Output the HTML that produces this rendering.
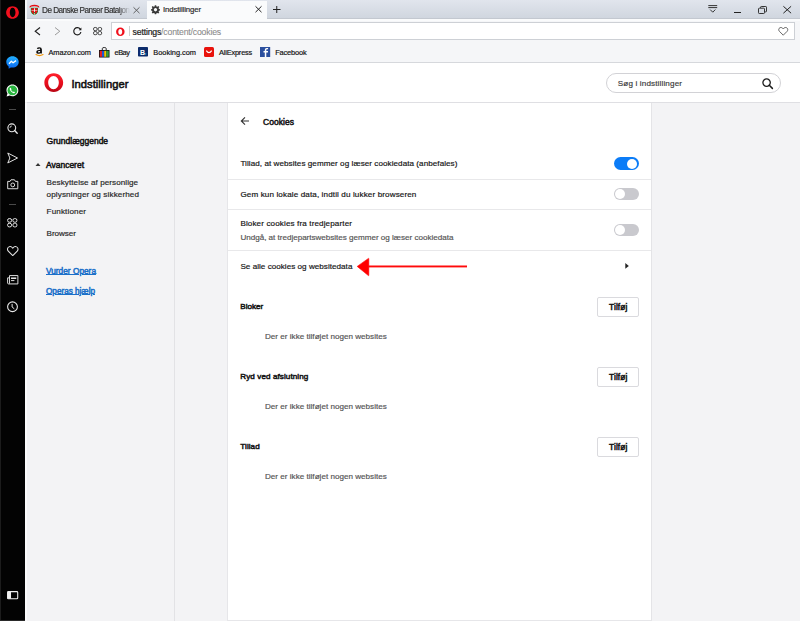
<!DOCTYPE html>
<html><head><meta charset="utf-8">
<style>
html,body{margin:0;padding:0;}
body{width:800px;height:621px;position:relative;overflow:hidden;background:#f3f3f5;font-family:"Liberation Sans",sans-serif;}
.a{position:absolute;}
.t{position:absolute;white-space:nowrap;line-height:1;}
svg{position:absolute;overflow:visible;}
</style></head><body>
<!-- black side panel -->
<div class="a" style="left:0;top:0;width:25px;height:621px;background:#030303;"></div>
<div class="a" style="left:0;top:0;width:1px;height:621px;background:#1c1c1c;"></div>
<div class="a" style="left:0;top:620px;width:25px;height:1px;background:#2a2a2a;"></div>
<!-- tab strip -->
<div class="a" style="left:25px;top:0;width:775px;height:18px;background:linear-gradient(#e1e5ed,#d0d6df);"></div>
<div class="a" style="left:25px;top:18px;width:775px;height:1px;background:#c3c8d0;"></div>
<div class="a" style="left:25px;top:19px;width:775px;height:2px;background:#fafbfc;"></div>
<!-- white strip next to sidebar -->
<div class="a" style="left:25px;top:0;width:2px;height:19px;background:#f4f6f8;"></div>
<!-- active tab -->
<div class="a" style="left:147px;top:1px;width:120px;height:20px;background:#fafbfc;"></div>
<!-- toolbar -->
<div class="a" style="left:25px;top:21px;width:775px;height:41px;background:#f5f6f8;"></div>
<div class="a" style="left:25px;top:62px;width:775px;height:1px;background:#d6d8dc;"></div>
<!-- address box -->
<div class="a" style="left:110.5px;top:22px;width:682.5px;height:16.4px;background:#fff;border:1px solid #cdd0d5;"></div>
<div class="a" style="left:129px;top:26px;width:1px;height:10px;background:#d0d0d0;"></div>
<div class="t" style="left:132.6px;top:27.5px;font-size:8.7px;color:#1a1a1a;letter-spacing:-0.18px;-webkit-text-stroke:0.2px #1a1a1a;">settings<span style="color:#8c8c8c;-webkit-text-stroke:0.1px #8c8c8c;">/content/cookies</span></div>

<!-- settings header -->
<div class="a" style="left:25px;top:63px;width:775px;height:39px;background:#fff;"></div>
<div class="a" style="left:27px;top:102px;width:773px;height:1px;background:#dfdfe3;"></div>
<!-- settings left nav -->
<div class="a" style="left:25px;top:103px;width:2px;height:518px;background:#fbfbfc;"></div>
<div class="a" style="left:27px;top:103px;width:147px;height:518px;background:#f3f3f5;"></div>
<div class="a" style="left:174px;top:103px;width:1px;height:518px;background:#e2e2e5;"></div>
<!-- card -->
<div class="a" style="left:227px;top:103px;width:423px;height:517px;background:#fff;border-left:1px solid #e6e6e9;border-right:1px solid #e4e4e7;border-bottom:1px solid #e6e6e9;"></div>
<div class="a" style="left:228px;top:178.5px;width:423px;height:1px;background:#e8e8ea;"></div>
<div class="a" style="left:228px;top:208.5px;width:423px;height:1px;background:#e8e8ea;"></div>
<div class="a" style="left:228px;top:249.5px;width:423px;height:1px;background:#e8e8ea;"></div>

<!-- search box -->
<div class="a" style="left:606px;top:73.3px;width:173px;height:17.8px;border:1px solid #d2d2d6;border-radius:10px;background:#fff;"></div>
<svg style="left:762px;top:78px" width="11" height="11" viewBox="0 0 11 11"><circle cx="4.6" cy="4.6" r="3.7" fill="none" stroke="#1c1c1c" stroke-width="1.3"/><path d="M7.3 7.3 L10.4 10.4" stroke="#1c1c1c" stroke-width="1.5" stroke-linecap="round"/></svg>

<!-- buttons -->
<div class="a" style="left:597px;top:297px;width:40px;height:18px;border:1px solid #dadade;border-radius:2px;background:#fff;"></div>
<div class="a" style="left:597px;top:367px;width:40px;height:18px;border:1px solid #dadade;border-radius:2px;background:#fff;"></div>
<div class="a" style="left:597px;top:437px;width:40px;height:18px;border:1px solid #dadade;border-radius:2px;background:#fff;"></div>

<!-- toggles -->
<div class="a" style="left:613.5px;top:157.3px;width:25.5px;height:13px;border-radius:6.5px;background:#0b7cf7;"></div>
<div class="a" style="left:626.8px;top:158.6px;width:10.5px;height:10.5px;border-radius:50%;background:#fff;"></div>
<div class="a" style="left:613.5px;top:187.8px;width:25.5px;height:12.6px;border-radius:6.3px;background:#c9c9ce;"></div>
<div class="a" style="left:614.8px;top:189.1px;width:10px;height:10px;border-radius:50%;background:#fff;"></div>
<div class="a" style="left:613.5px;top:223.8px;width:25.5px;height:12.6px;border-radius:6.3px;background:#c9c9ce;"></div>
<div class="a" style="left:614.8px;top:225.1px;width:10px;height:10px;border-radius:50%;background:#fff;"></div>

<!-- card icons -->
<svg style="left:240px;top:116px" width="10" height="10" viewBox="0 0 10 10"><path d="M9 5 H1.5 M5 1.3 L1.3 5 L5 8.7" fill="none" stroke="#333" stroke-width="1.1"/></svg>
<svg style="left:625.3px;top:262.5px" width="4" height="5.8" viewBox="0 0 4 5.8"><path d="M0.3 0 L3.8 2.9 L0.3 5.8 Z" fill="#222"/></svg>
<svg style="left:35px;top:161.5px" width="6" height="5" viewBox="0 0 6 5"><path d="M0.5 4 L3 1 L5.5 4 Z" fill="#333"/></svg>

<!-- red arrow -->
<svg style="left:350px;top:250px" width="120" height="30" viewBox="0 0 120 30"><path d="M7.2 16.4 L18.4 8.4 Q18.8 8.2 18.8 8.7 L18.8 25.3 Q18.8 25.8 18.4 25.6 Z" fill="#ff0000" stroke="#ff0000" stroke-width="0.6" stroke-linejoin="round"/><rect x="18" y="15.5" width="99" height="1.9" fill="#ff0a0a"/></svg>

<!-- header opera logo -->
<svg style="left:44px;top:73.4px" width="19.5" height="19.2" viewBox="0 0 20 20"><defs><linearGradient id="og" x1="0" y1="0" x2="0" y2="1"><stop offset="0" stop-color="#ff1f2a"/><stop offset="0.6" stop-color="#e40c1c"/><stop offset="1" stop-color="#b80614"/></linearGradient></defs><path fill-rule="evenodd" fill="url(#og)" d="M10 0.2 C15.6 0.2 19.8 4.6 19.8 10 C19.8 15.4 15.6 19.8 10 19.8 C4.4 19.8 0.2 15.4 0.2 10 C0.2 4.6 4.4 0.2 10 0.2 Z M9.75 3.0 C6.5 3.0 4.2 6.2 4.2 9.9 C4.2 13.6 6.5 16.9 9.75 16.9 C13 16.9 15.3 13.6 15.3 9.9 C15.3 6.2 13 3.0 9.75 3.0 Z"/></svg>

<!-- sidebar opera logo -->
<svg style="left:6px;top:6px" width="13" height="13" viewBox="0 0 20 20"><path fill-rule="evenodd" fill="#f2101e" d="M10 0.2 C15.6 0.2 19.8 4.6 19.8 10 C19.8 15.4 15.6 19.8 10 19.8 C4.4 19.8 0.2 15.4 0.2 10 C0.2 4.6 4.4 0.2 10 0.2 Z M10.2 2.8 C7.6 2.8 5.8 6 5.8 10.1 C5.8 14.2 7.6 17.3 10.2 17.3 C12.8 17.3 14.6 14.2 14.6 10.1 C14.6 6 12.8 2.8 10.2 2.8 Z"/></svg>
<!-- messenger -->
<svg style="left:6px;top:56px" width="13" height="13" viewBox="0 0 13 13"><defs><linearGradient id="mg" x1="0" y1="0" x2="0" y2="1"><stop offset="0" stop-color="#22b0ff"/><stop offset="1" stop-color="#0a66f0"/></linearGradient></defs><path d="M6.5 0.3 C10.1 0.3 12.7 2.8 12.7 6 C12.7 9.2 10.1 11.6 6.5 11.6 C5.9 11.6 5.3 11.5 4.8 11.4 L2.7 12.7 L2.6 10.5 C1.1 9.4 0.3 7.8 0.3 6 C0.3 2.8 2.9 0.3 6.5 0.3 Z" fill="url(#mg)"/><path d="M3 7.7 L5.4 5.3 L7.1 6.7 L10 4.6" fill="none" stroke="#fff" stroke-width="1.35" stroke-linejoin="round"/></svg>
<!-- whatsapp -->
<svg style="left:5.9px;top:84px" width="12.8" height="13" viewBox="0 0 13 13"><path d="M6.5 0.5 C9.9 0.5 12.5 3.1 12.5 6.4 C12.5 9.7 9.9 12.3 6.5 12.3 C5.5 12.3 4.6 12.1 3.8 11.6 L0.6 12.5 L1.5 9.5 C0.9 8.6 0.5 7.5 0.5 6.4 C0.5 3.1 3.1 0.5 6.5 0.5 Z" fill="#fff"/><circle cx="6.5" cy="6.4" r="5" fill="#2ab540"/><path d="M4.3 3.6 C3.6 4.2 3.6 5.3 4.4 6.6 C5.2 7.9 6.6 9 7.8 9.2 C8.6 9.3 9.1 8.9 9.2 8.4 L8 7.6 L7.3 8.1 C6.4 7.7 5.6 6.9 5.2 6 L5.6 5.3 L4.9 3.9 Z" fill="#fff"/></svg>
<div class="a" style="left:9px;top:109px;width:7px;height:1px;background:#4a4a4a;"></div>
<div class="a" style="left:9px;top:203.5px;width:7px;height:1px;background:#4a4a4a;"></div>
<!-- search -->
<svg style="left:7px;top:123px" width="11" height="11" viewBox="0 0 11 11"><circle cx="4.8" cy="4.8" r="3.9" fill="none" stroke="#e8e8e8" stroke-width="1.1"/><path d="M3 4.8 A1.8 1.8 0 0 1 4.8 3" fill="none" stroke="#e8e8e8" stroke-width="0.9"/><path d="M7.6 7.6 L10.2 10.2" stroke="#e8e8e8" stroke-width="1.4" stroke-linecap="round"/></svg>
<!-- send -->
<svg style="left:6.5px;top:151.5px" width="11.5" height="12" viewBox="0 0 12 12"><path d="M0.8 0.8 L11 6 L0.8 11.2 L3 6 Z" fill="none" stroke="#e8e8e8" stroke-width="1" stroke-linejoin="round"/></svg>
<!-- camera -->
<svg style="left:6.5px;top:178.5px" width="11.5" height="10.5" viewBox="0 0 12 11"><path d="M0.7 2.5 H3.2 L4.2 0.8 H7.8 L8.8 2.5 H11.3 V10.2 H0.7 Z" fill="none" stroke="#e8e8e8" stroke-width="1"/><circle cx="6" cy="6.2" r="2" fill="none" stroke="#e8e8e8" stroke-width="1"/></svg>
<!-- speed dial -->
<svg style="left:7px;top:218px" width="10.5" height="9.5" viewBox="0 0 10.5 9.5"><g fill="none" stroke="#e8e8e8" stroke-width="1"><rect x="0.6" y="0.6" width="4" height="3.6" rx="1.6"/><rect x="5.9" y="0.6" width="4" height="3.6" rx="1.6"/><rect x="0.6" y="5.3" width="4" height="3.6" rx="1.6"/><rect x="5.9" y="5.3" width="4" height="3.6" rx="1.6"/></g></svg>
<!-- heart -->
<svg style="left:6.5px;top:246px" width="11.5" height="10" viewBox="0 0 12 10.5"><path d="M6 10 L1.3 5.3 C0 4 0.3 1.6 1.9 0.9 C3.4 0.2 4.9 0.8 6 2.3 C7.1 0.8 8.6 0.2 10.1 0.9 C11.7 1.6 12 4 10.7 5.3 Z" fill="none" stroke="#e8e8e8" stroke-width="1.1" stroke-linejoin="round"/></svg>
<!-- news -->
<svg style="left:6.5px;top:274.5px" width="11.5" height="9.5" viewBox="0 0 12 10"><path d="M2.6 0.6 H11.4 V9.4 H1.6 C1 9.4 0.6 9 0.6 8.4 V3 H2.6" fill="none" stroke="#e8e8e8" stroke-width="1"/><path d="M2.6 0.6 V9" stroke="#e8e8e8" stroke-width="1"/><rect x="4.2" y="2.6" width="5.5" height="1.6" fill="#e8e8e8"/><rect x="4.2" y="5.4" width="3.5" height="1" fill="#e8e8e8"/></svg>
<!-- clock -->
<svg style="left:6.8px;top:301.3px" width="11" height="11.5" viewBox="0 0 11 11.5"><circle cx="5.5" cy="5.75" r="4.9" fill="none" stroke="#e8e8e8" stroke-width="1.1"/><path d="M5.1 2.9 V6 L7.3 7.8" fill="none" stroke="#e8e8e8" stroke-width="1"/></svg>
<!-- sidebar toggle -->
<svg style="left:6.8px;top:591px" width="11.3" height="8.4" viewBox="0 0 11.5 8.5"><rect x="0.6" y="0.6" width="10.3" height="7.3" rx="0.8" fill="none" stroke="#f0f0f0" stroke-width="1.1"/><rect x="0.6" y="0.6" width="3.5" height="7.3" fill="#f0f0f0"/></svg>

<!-- tab favicon -->
<svg style="left:29px;top:3.5px" width="11" height="12" viewBox="0 0 11 12"><path d="M1.2 3.4 H9.6 V7.8 Q9.2 10.6 5.4 11.8 Q1.6 10.6 1.2 7.8 Z" fill="#d8f6f0"/><path d="M1.8 3.8 H9 V7.8 Q8.6 10 5.4 11.2 Q2.2 10 1.8 7.8 Z" fill="#1d8a3c"/><path d="M2.4 4.2 H8.4 V7.6 Q8 9.6 5.4 10.6 Q2.8 9.6 2.4 7.6 Z" fill="#e80d12"/><path d="M5 4.2 H5.9 V10.6 H5 Z M2.4 5.9 H8.4 V6.6 H2.4 Z" fill="#f6f6f6"/><circle cx="5.4" cy="8.6" r="0.8" fill="#1d8a3c"/><path d="M0.4 3.6 Q0.6 0.9 5.4 0.8 Q10.2 0.9 10.4 3.6 L9.6 3.6 Q9 2.2 5.4 2.2 Q1.8 2.2 1.2 3.6 Z" fill="#e50d12"/></svg>
<!-- tab close x -->
<svg style="left:133px;top:6.5px" width="7" height="6.5" viewBox="0 0 7 6.5"><path d="M0.5 0.3 L6.5 6.2 M6.5 0.3 L0.5 6.2" stroke="#555" stroke-width="0.9"/></svg>
<!-- gear -->
<svg style="left:150.5px;top:4.7px" width="9" height="9" viewBox="0 0 18 18"><path fill="#3a3a3a" fill-rule="evenodd" d="M7.6 0.5 H10.4 L10.9 2.9 L12.6 3.6 L14.6 2.2 L16.6 4.2 L15.2 6.2 L15.9 7.9 L18 8.3 V11.1 L15.9 11.5 L15.2 13.2 L16.6 15.2 L14.6 17.2 L12.6 15.8 L10.9 16.5 L10.4 18.5 H7.6 L7.1 16.5 L5.4 15.8 L3.4 17.2 L1.4 15.2 L2.8 13.2 L2.1 11.5 L0 11.1 V8.3 L2.1 7.9 L2.8 6.2 L1.4 4.2 L3.4 2.2 L5.4 3.6 L7.1 2.9 Z M9 6.2 A3.3 3.3 0 1 0 9.001 6.2 Z"/></svg>
<svg style="left:254.5px;top:6.3px" width="7" height="6.5" viewBox="0 0 7 6.5"><path d="M0.5 0.3 L6.5 6.2 M6.5 0.3 L0.5 6.2" stroke="#222" stroke-width="1"/></svg>
<!-- plus -->
<svg style="left:273px;top:6px" width="7.5" height="7" viewBox="0 0 7.5 7"><path d="M3.75 0 V7 M0 3.5 H7.5" stroke="#222" stroke-width="1"/></svg>
<!-- window controls -->
<svg style="left:707.5px;top:4.8px" width="9.5" height="8.5" viewBox="0 0 9.5 8.5"><path d="M0.3 0.6 H9.2 M0.3 2.6 H9.2" stroke="#333" stroke-width="1"/><path d="M2.2 4.6 L4.75 7.2 L7.3 4.6" fill="none" stroke="#333" stroke-width="1"/></svg>
<div class="a" style="left:734px;top:12px;width:7.2px;height:1.1px;background:#222;"></div>
<svg style="left:758px;top:5.5px" width="9" height="8" viewBox="0 0 9 8"><path d="M2.6 2 V1.2 Q2.6 0.5 3.3 0.5 H7.8 Q8.5 0.5 8.5 1.2 V5.2 Q8.5 5.9 7.8 5.9 H6.8" fill="none" stroke="#222" stroke-width="0.9"/><rect x="0.5" y="2.2" width="6" height="5.3" rx="0.8" fill="none" stroke="#222" stroke-width="0.9"/></svg>
<svg style="left:783.2px;top:5.8px" width="8.5" height="7.5" viewBox="0 0 8.5 7.5"><path d="M0.4 0.3 L8.1 7.2 M8.1 0.3 L0.4 7.2" stroke="#222" stroke-width="1"/></svg>

<!-- toolbar nav icons -->
<svg style="left:34px;top:27px" width="7" height="8.5" viewBox="0 0 7 8.5"><path d="M6 0.5 L1.2 4.25 L6 8" fill="none" stroke="#222" stroke-width="1.1"/></svg>
<svg style="left:54px;top:27px" width="7" height="8.5" viewBox="0 0 7 8.5"><path d="M1 0.5 L5.8 4.25 L1 8" fill="none" stroke="#9a9a9a" stroke-width="1"/></svg>
<svg style="left:72.9px;top:27.2px" width="8.8" height="8.2" viewBox="0 0 8.8 8.2"><path d="M7.3 2.2 A3.6 3.6 0 1 0 7.9 5" fill="none" stroke="#1a1a1a" stroke-width="1.15"/><path d="M8.4 0.6 V3.3 H5.7 Z" fill="#1a1a1a"/></svg>
<svg style="left:92.8px;top:27.2px" width="9.2" height="8.2" viewBox="0 0 9.5 8.5"><g fill="none" stroke="#333" stroke-width="0.95"><rect x="0.5" y="0.5" width="3.8" height="3.3" rx="1.5"/><rect x="5.2" y="0.5" width="3.8" height="3.3" rx="1.5"/><rect x="0.5" y="4.7" width="3.8" height="3.3" rx="1.5"/><rect x="5.2" y="4.7" width="3.8" height="3.3" rx="1.5"/></g></svg>
<!-- url opera icon -->
<svg style="left:115.7px;top:26.5px" width="8.7" height="9.4" viewBox="0 0 20 20"><path fill-rule="evenodd" fill="#f0101c" d="M10 0.2 C15.6 0.2 19.8 4.6 19.8 10 C19.8 15.4 15.6 19.8 10 19.8 C4.4 19.8 0.2 15.4 0.2 10 C0.2 4.6 4.4 0.2 10 0.2 Z M9.8 3.6 C7 3.6 5.3 6.6 5.3 10.3 C5.3 14 7 17 9.8 17 C12.6 17 14.3 14 14.3 10.3 C14.3 6.6 12.6 3.6 9.8 3.6 Z"/></svg>
<!-- url heart -->
<svg style="left:778px;top:27px" width="10.5" height="8.6" viewBox="0 0 12 10.5"><path d="M6 10 L1.3 5.3 C0 4 0.3 1.6 1.9 0.9 C3.4 0.2 4.9 0.8 6 2.3 C7.1 0.8 8.6 0.2 10.1 0.9 C11.7 1.6 12 4 10.7 5.3 Z" fill="none" stroke="#444" stroke-width="1" stroke-linejoin="round"/></svg>

<!-- bookmark icons -->
<svg style="left:34.5px;top:46px" width="9" height="11" viewBox="0 0 9 11"><path d="M1.8 2.6 Q2.3 1.3 4.3 1.3 Q6.9 1.3 6.9 3.5 V7.6 H5.3 V6.9 Q4.6 7.8 3.3 7.8 Q1.2 7.8 1.2 5.9 Q1.2 4 4 3.9 L5.2 3.85 Q5.2 2.6 4.2 2.6 Q3.4 2.6 3.2 3.2 Z M5.2 4.9 L4.3 4.95 Q2.9 5 2.9 5.8 Q2.9 6.5 3.7 6.5 Q5.2 6.5 5.2 5.3 Z" fill="#0a0a0a"/><path d="M1 8.6 Q4.5 10.6 8 8.6" fill="none" stroke="#f59a0a" stroke-width="1.2" stroke-linecap="round"/></svg>
<svg style="left:99px;top:46.5px" width="10.5" height="10.5" viewBox="0 0 10.5 10.5"><path d="M3.3 3 V1.6 Q3.3 0.5 5.25 0.5 Q7.2 0.5 7.2 1.6 V3" fill="none" stroke="#111" stroke-width="0.9"/><rect x="0" y="3" width="10.5" height="7.5" fill="#111"/><rect x="0.8" y="3.8" width="2.2" height="6" fill="#e52020"/><rect x="3" y="3.8" width="2.2" height="6" fill="#1f58d6"/><rect x="5.2" y="3.8" width="2.2" height="6" fill="#f2c200"/><rect x="7.4" y="3.8" width="2.3" height="6" fill="#34a13a"/></svg>
<svg style="left:138px;top:47px" width="10" height="9.5" viewBox="0 0 10 9.5"><rect width="10" height="9.5" rx="0.8" fill="#0c2b6b"/><text x="2" y="7.6" font-family="Liberation Sans" font-weight="700" font-size="7" fill="#fff">B</text><rect x="7" y="6.3" width="1.3" height="1.3" fill="#22a8e0"/></svg>
<svg style="left:204.3px;top:46.7px" width="10" height="10" viewBox="0 0 10 10"><rect width="10" height="10" rx="1.5" fill="#e8120c"/><path d="M2.3 3.6 Q5 7.6 7.7 3.6" fill="none" stroke="#fff" stroke-width="1.2"/></svg>
<svg style="left:259.8px;top:46.6px" width="10.2" height="10" viewBox="0 0 10.2 10"><rect width="10.2" height="10" fill="#2b4f9e"/><path d="M6.3 10 V5.4 H7.9 L8.1 3.9 H6.3 V3 Q6.3 2.3 7 2.3 H8.1 V1 H6.7 Q4.8 1 4.8 2.9 V3.9 H3.5 V5.4 H4.8 V10 Z" fill="#fff"/></svg>

<div class="t" style="left:42.00px;top:6.56px;font-size:8.2px;font-weight:400;color:#333;letter-spacing:-0.524px;width:88px;overflow:hidden;-webkit-mask-image:linear-gradient(90deg,#000 86%,transparent 100%);-webkit-text-stroke:0.18px #333;">De Danske Panser Bataljon</div>
<div class="t" style="left:163.00px;top:6.30px;font-size:7.8px;font-weight:400;color:#2a2a2a;letter-spacing:-0.120px;-webkit-text-stroke:0.18px #2a2a2a;">Indstillinger</div>
<div class="t" style="left:48.50px;top:48.94px;font-size:7.4px;font-weight:400;color:#111;letter-spacing:-0.070px;-webkit-text-stroke:0.18px #111;">Amazon.com</div>
<div class="t" style="left:114.50px;top:48.94px;font-size:7.4px;font-weight:400;color:#111;letter-spacing:-0.482px;-webkit-text-stroke:0.18px #111;">eBay</div>
<div class="t" style="left:153.30px;top:48.94px;font-size:7.4px;font-weight:400;color:#111;letter-spacing:-0.002px;-webkit-text-stroke:0.18px #111;">Booking.com</div>
<div class="t" style="left:219.00px;top:48.94px;font-size:7.4px;font-weight:400;color:#111;letter-spacing:-0.179px;-webkit-text-stroke:0.18px #111;">AliExpress</div>
<div class="t" style="left:275.20px;top:48.94px;font-size:7.4px;font-weight:400;color:#111;letter-spacing:-0.137px;-webkit-text-stroke:0.18px #111;">Facebook</div>
<div class="t" style="left:71.40px;top:79.02px;font-size:11.2px;font-weight:400;color:#111;letter-spacing:0.034px;-webkit-text-stroke:0.55px #111;">Indstillinger</div>
<div class="t" style="left:617.80px;top:79.94px;font-size:8.1px;font-weight:400;color:#3c3c3c;letter-spacing:0.143px;-webkit-text-stroke:0.18px #3c3c3c;">Søg i indstillinger</div>
<div class="t" style="left:46.60px;top:136.90px;font-size:8.5px;font-weight:400;color:#151515;letter-spacing:0.005px;-webkit-text-stroke:0.5px #151515;">Grundlæggende</div>
<div class="t" style="left:46.00px;top:160.90px;font-size:8.5px;font-weight:400;color:#151515;letter-spacing:-0.015px;-webkit-text-stroke:0.5px #151515;">Avanceret</div>
<div class="t" style="left:46.60px;top:178.84px;font-size:8.1px;font-weight:400;color:#262626;letter-spacing:0.063px;-webkit-text-stroke:0.18px #262626;">Beskyttelse af personlige</div>
<div class="t" style="left:46.60px;top:190.94px;font-size:8.1px;font-weight:400;color:#262626;letter-spacing:0.125px;-webkit-text-stroke:0.18px #262626;">oplysninger og sikkerhed</div>
<div class="t" style="left:46.60px;top:207.54px;font-size:8.1px;font-weight:400;color:#262626;letter-spacing:0.129px;-webkit-text-stroke:0.18px #262626;">Funktioner</div>
<div class="t" style="left:46.60px;top:229.94px;font-size:8.1px;font-weight:400;color:#262626;letter-spacing:-0.047px;-webkit-text-stroke:0.18px #262626;">Browser</div>
<div class="t" style="left:46.00px;top:267.07px;font-size:8.3px;font-weight:400;color:#1a6fc9;letter-spacing:0.004px;text-decoration:underline;text-underline-offset:0px;text-decoration-thickness:1px;-webkit-text-stroke:0.5px #1a6fc9;">Vurder Opera</div>
<div class="t" style="left:46.00px;top:287.76px;font-size:8.2px;font-weight:400;color:#1a6fc9;letter-spacing:-0.014px;text-decoration:underline;text-underline-offset:0px;text-decoration-thickness:1px;-webkit-text-stroke:0.5px #1a6fc9;">Operas hjælp</div>
<div class="t" style="left:263.00px;top:117.60px;font-size:8.5px;font-weight:400;color:#151515;letter-spacing:0.049px;-webkit-text-stroke:0.5px #151515;">Cookies</div>
<div class="t" style="left:240.40px;top:160.44px;font-size:8.1px;font-weight:400;color:#141414;letter-spacing:0.056px;-webkit-text-stroke:0.18px #141414;">Tillad, at websites gemmer og læser cookiedata (anbefales)</div>
<div class="t" style="left:240.40px;top:191.24px;font-size:8.1px;font-weight:400;color:#141414;letter-spacing:0.119px;-webkit-text-stroke:0.18px #141414;">Gem kun lokale data, indtil du lukker browseren</div>
<div class="t" style="left:240.40px;top:220.04px;font-size:8.1px;font-weight:400;color:#141414;letter-spacing:0.121px;-webkit-text-stroke:0.18px #141414;">Bloker cookies fra tredjeparter</div>
<div class="t" style="left:240.40px;top:233.84px;font-size:8.1px;font-weight:400;color:#555;letter-spacing:-0.021px;-webkit-text-stroke:0.18px #555;">Undgå, at tredjepartswebsites gemmer og læser cookiedata</div>
<div class="t" style="left:240.40px;top:262.84px;font-size:8.1px;font-weight:400;color:#141414;letter-spacing:0.030px;-webkit-text-stroke:0.18px #141414;">Se alle cookies og websitedata</div>
<div class="t" style="left:240.30px;top:303.34px;font-size:8.1px;font-weight:400;color:#151515;letter-spacing:-0.028px;-webkit-text-stroke:0.5px #151515;">Bloker</div>
<div class="t" style="left:265.00px;top:332.74px;font-size:8.1px;font-weight:400;color:#555;letter-spacing:0.010px;-webkit-text-stroke:0.18px #555;">Der er ikke tilføjet nogen websites</div>
<div class="t" style="left:609.00px;top:303.29px;font-size:8.4px;font-weight:400;color:#151515;letter-spacing:0.114px;-webkit-text-stroke:0.5px #151515;">Tilføj</div>
<div class="t" style="left:240.30px;top:373.34px;font-size:8.1px;font-weight:400;color:#151515;letter-spacing:0.083px;-webkit-text-stroke:0.5px #151515;">Ryd ved afslutning</div>
<div class="t" style="left:265.00px;top:402.74px;font-size:8.1px;font-weight:400;color:#555;letter-spacing:0.010px;-webkit-text-stroke:0.18px #555;">Der er ikke tilføjet nogen websites</div>
<div class="t" style="left:609.00px;top:373.29px;font-size:8.4px;font-weight:400;color:#151515;letter-spacing:0.114px;-webkit-text-stroke:0.5px #151515;">Tilføj</div>
<div class="t" style="left:240.30px;top:443.14px;font-size:8.1px;font-weight:400;color:#151515;letter-spacing:0.072px;-webkit-text-stroke:0.5px #151515;">Tillad</div>
<div class="t" style="left:265.00px;top:472.54px;font-size:8.1px;font-weight:400;color:#555;letter-spacing:0.010px;-webkit-text-stroke:0.18px #555;">Der er ikke tilføjet nogen websites</div>
<div class="t" style="left:609.00px;top:443.09px;font-size:8.4px;font-weight:400;color:#151515;letter-spacing:0.114px;-webkit-text-stroke:0.5px #151515;">Tilføj</div>
</body></html>
